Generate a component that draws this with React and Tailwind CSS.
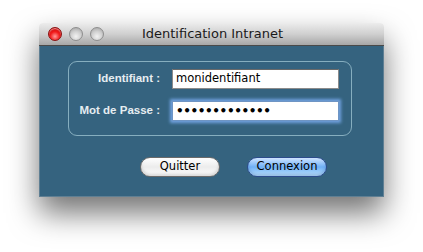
export default function App() {
  return (
    <div className="w-[423px] h-[252px] bg-white pl-[39px] pt-[23px] font-['DejaVu_Sans',sans-serif]">
      <div className="w-[345px] shadow-[0_16px_30px_rgba(0,0,0,0.55)] rounded-t-[4px]">
        {/* title bar */}
        <div className="relative h-[23px] rounded-t-[4px] bg-gradient-to-b from-[#ececec] via-[#d0d0d0] to-[#a7a7a7] border-b border-[#4a4a4a] flex items-center">
          <div className="flex items-center gap-[7px] pl-[9px]">
            <span className="w-[14px] h-[14px] rounded-full border border-[#8a1010] bg-[radial-gradient(circle_at_50%_70%,#ff9a9a_0%,#f21a1a_45%,#b10000_100%)] shadow-[inset_0_1px_1px_rgba(255,255,255,0.6)]" />
            <span className="w-[14px] h-[14px] rounded-full border border-[#8e8e8e] bg-[radial-gradient(circle_at_50%_70%,#f2f2f2_0%,#cfcfcf_50%,#9d9d9d_100%)]" />
            <span className="w-[14px] h-[14px] rounded-full border border-[#8e8e8e] bg-[radial-gradient(circle_at_50%_70%,#f2f2f2_0%,#cfcfcf_50%,#9d9d9d_100%)]" />
          </div>
          <div className="absolute inset-0 flex items-center justify-center pl-[2px] text-[13px] text-[#1a1a1a]">
            Identification Intranet
          </div>
        </div>

        {/* body */}
        <div className="h-[151px] bg-[#35637f] border-x border-b border-[#5f7f93] pt-[15px] pl-[28px]">
          <div className="w-[284px] h-[75px] rounded-[9px] border border-[#86aebf] pt-[7px] flex flex-col gap-[12px]">
            <div className="flex items-center">
              <span className="w-[92px] text-right pr-[1px] text-[11.5px] font-bold text-[#e6edf1] font-['Liberation_Sans',sans-serif]">
                Identifiant :
              </span>
              <div className="ml-[11px] w-[167px] h-[20px] bg-white border border-[#8b8b8b] border-t-[#6a6a6a] flex items-center pl-[3px] text-[11.5px] text-black">
                monidentifiant
              </div>
            </div>
            <div className="flex items-center">
              <span className="w-[92px] text-right pr-[1px] text-[11.5px] font-bold text-[#e6edf1] font-['Liberation_Sans',sans-serif]">
                Mot de Passe :
              </span>
              <div className="ml-[11px] w-[167px] h-[20px] bg-white border border-[#6f95c4] shadow-[0_0_3px_2px_rgba(120,170,235,0.9)] flex items-center pl-[3px] text-[12px] font-bold text-black tracking-[-0.4px]">
                •••••••••••••
              </div>
            </div>
          </div>

          <div className="flex gap-[27px] pl-[72px] mt-[21px]">
            <button className="w-[80px] h-[20px] rounded-full border border-[#6b6b6b] bg-gradient-to-b from-[#ffffff] via-[#ececec] to-[#ffffff] shadow-[inset_0_-2px_3px_rgba(0,0,0,0.15)] text-[11.5px] text-black leading-none">
              Quitter
            </button>
            <button className="w-[80px] h-[20px] rounded-full border border-[#2c4c8c] bg-gradient-to-b from-[#cfe4ff] via-[#6fb0f5] to-[#bfe5ff] shadow-[inset_0_-2px_3px_rgba(0,40,120,0.2)] text-[11.5px] text-black leading-none">
              Connexion
            </button>
          </div>
        </div>
      </div>
    </div>
  );
}
